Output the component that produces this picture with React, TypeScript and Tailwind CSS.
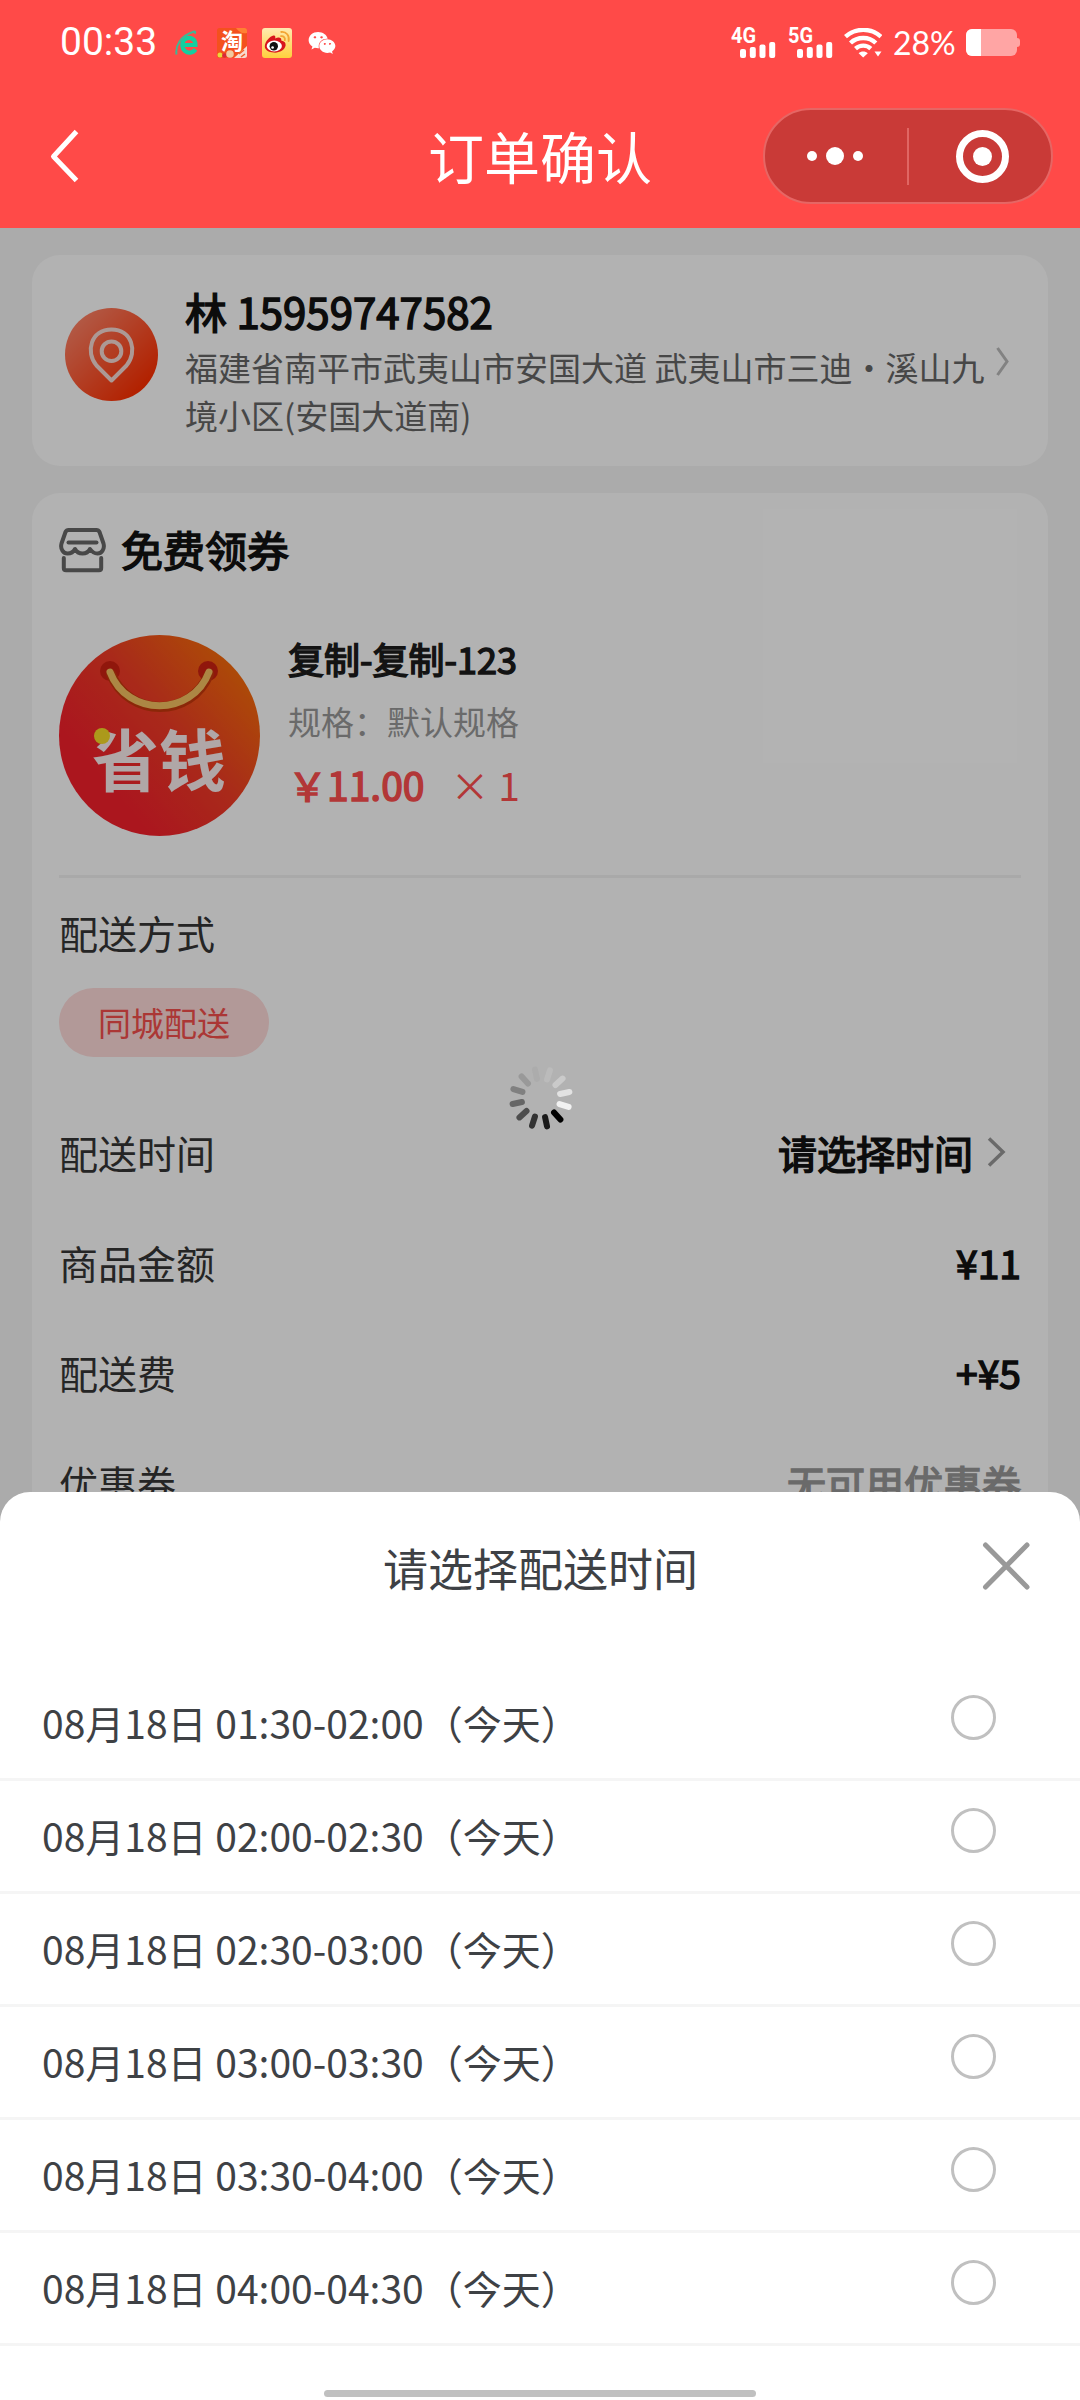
import { useState } from "react";
import { FaWeixin } from "react-icons/fa";

interface TimeSlot {
  id: number;
  label: string;
}

interface SummaryRowProps {
  label: string;
  value: string;
  muted?: boolean;
  arrow?: boolean;
}

const slots: TimeSlot[] = [
  { id: 1, label: "08月18日 01:30-02:00（今天）" },
  { id: 2, label: "08月18日 02:00-02:30（今天）" },
  { id: 3, label: "08月18日 02:30-03:00（今天）" },
  { id: 4, label: "08月18日 03:00-03:30（今天）" },
  { id: 5, label: "08月18日 03:30-04:00（今天）" },
  { id: 6, label: "08月18日 04:00-04:30（今天）" },
];

// starts at the darkest spoke, clockwise
const spokes = ["#000", "#1a1a1a", "#333", "#4d4d4d", "#666", "#808080", "#999", "#acacac", "#bbb", "#cacaca", "#e2e2e2", "#f2f2f2"];

const BrowserIcon = () => (
  <svg className="h-[26px] w-[24px]" viewBox="0 0 24 26" fill="none">
    <path d="M20.500 19.500C18 23.200 13 23.600 10 21C6.800 18.500 6.600 13.600 8.600 10.600C11 7 17 7 19.300 10.500C20.300 12 20.600 13.600 20.500 15H9" stroke="#14cfa0" strokeWidth="4.200" />
    <path d="M1.500 24.500C.2 16 5 6 19 1.500C20.500 1.200 20.500 2.600 19.500 3.600" stroke="#3fb795" strokeWidth="2" />
  </svg>
);

const TaobaoIcon = () => (
  <svg className="h-[30px] w-[30px] overflow-visible" viewBox="0 0 30 30">
    <rect width="30" height="30" rx="2.500" fill="#f4511e" />
    <path d="M19 0h8.500A2.500 2.500 0 0 1 30 2.500V5c-5 1-8-1-11-5z" fill="#ff8033" />
    <path d="M17 30l13-12v9.500a2.500 2.500 0 0 1-2.500 2.500z" fill="#f7d9d0" />
    <text x="4" y="20.500" fontSize="22" fontWeight="700" fill="#fff" fontFamily="Noto Sans CJK SC, sans-serif">淘</text>
    <circle cx="3" cy="27" r="2.500" fill="#e8d83c" />
    <circle cx="7.500" cy="27.500" r="2.300" fill="#d8293a" />
    <circle cx="13" cy="26" r="3.800" fill="#f1c9a0" />
    <path d="M22 26l5-4M24 29l4-3" stroke="#f0602c" strokeWidth="1.500" />
  </svg>
);

const WeiboIcon = () => (
  <svg className="h-[30px] w-[30px]" viewBox="0 0 30 30">
    <defs>
      <linearGradient id="weibo" x1="0" y1="0" x2="0" y2="1">
        <stop offset="0" stopColor="#ffeab0" />
        <stop offset="1" stopColor="#ffcf3d" />
      </linearGradient>
    </defs>
    <rect width="30" height="30" rx="3" fill="url(#weibo)" />
    <path d="M2.800 18.500C2.800 14 8 8 11.500 7.600C13.600 7.400 13.500 9 13.200 10.400C16 9.200 20 9 19.200 12.600C22.500 13.300 24 15 23.600 17.600C22.800 22.500 17 25 11.800 24.600C6.600 24.200 2.800 22 2.800 18.500z" fill="#d8151c" />
    <ellipse cx="12.300" cy="18" rx="7.600" ry="5.400" fill="#fff" />
    <circle cx="11.800" cy="18.200" r="4.200" fill="#111" />
    <circle cx="10.600" cy="19.500" r="1.300" fill="#fff" />
    <path d="M19 8.200c2.600-.4 4.400 1.600 3.800 4M19.200 4c5-.5 8.600 3.600 7.400 9" fill="none" stroke="#f3a533" strokeWidth="1.800" strokeLinecap="round" />
  </svg>
);

const Signal = ({ type }: { type: string }) => (
  <svg className="h-[32px] w-[46px] overflow-visible" viewBox="0 0 46 32">
    <text x="0" y="16" fontSize="21.500" fontWeight="700" fill="#fff" fontFamily="Roboto, sans-serif" textLength="25" lengthAdjust="spacingAndGlyphs">{type}</text>
    <rect x="9" y="22" width="6" height="9" rx="2" fill="#fff" />
    <rect x="18.800" y="20" width="6" height="11" rx="2" fill="#fff" />
    <rect x="28.500" y="17.500" width="6" height="13.500" rx="2" fill="#fff" />
    <rect x="38.200" y="15" width="6" height="16" rx="2" fill="#fff" />
  </svg>
);

const WifiIcon = () => (
  <svg className="h-[30px] w-[38px]" viewBox="0 0 38 30" fill="none" stroke="#fff" strokeWidth="4.400">
    <path d="M1.500 8.700C11.500-.4 27-.4 37 8.700" />
    <path d="M6.500 15C13.500 8.400 25 8.400 31.800 15" />
    <path d="M11.500 20.600C16 16.600 22.600 16.600 26.800 20.600" />
    <path d="M14.600 25.300C17 23 21.400 23 23.800 25.300L19.200 29.500z" fill="#fff" stroke="none" />
    <path d="M30.500 23.500h7l-3.500 5z" fill="#fff" stroke="none" />
  </svg>
);

const StatusBar = () => (
  <div className="flex h-[84px] items-center pt-px pl-[60px] pr-[60px] text-white">
    <span className="w-[115px] font-[Roboto,sans-serif] text-[39px] leading-none">00:33</span>
    <BrowserIcon />
    <span className="ml-[18px]"><TaobaoIcon /></span>
    <span className="ml-[15px]"><WeiboIcon /></span>
    <FaWeixin className="ml-[16px] h-[28px] w-[28px]" />
    <div className="ml-auto flex items-center">
      <Signal type="4G" />
      <span className="ml-[11px]"><Signal type="5G" /></span>
      <span className="ml-[10px]"><WifiIcon /></span>
      <span className="ml-[11px] w-[73px] whitespace-nowrap font-[Lato,sans-serif] text-[32px] leading-none">28%</span>
      <div className="flex h-[27px] w-[51px] overflow-hidden rounded-[6px] bg-white/50">
        <div className="w-[15px] bg-white" />
      </div>
      <div className="h-[9px] w-[3px] rounded-r-sm bg-white/50" />
    </div>
  </div>
);

const NavBar = () => (
  <div className="flex h-[144px] items-center justify-between pl-[49px] pr-[27px]">
    <svg className="h-[54px] w-[32px]" viewBox="0 0 32 54" fill="none" stroke="#fff" strokeWidth="5">
      <path d="M27.500 2.500L4.500 27.500L27.500 51.500" strokeLinejoin="round" />
    </svg>
    <h1 className="-mt-[2px] ml-[347px] text-[56px] leading-[80px] text-white">订单确认</h1>
    <div className="ml-auto flex h-[96px] w-[290px] items-center rounded-full border-2 border-[#e66664] bg-[#c93a37]">
      <div className="flex w-[142px] items-center justify-center gap-[9px] pr-[2px]">
        <i className="size-[10px] rounded-full bg-white" />
        <i className="size-[18px] rounded-full bg-white" />
        <i className="size-[10px] rounded-full bg-white" />
      </div>
      <div className="h-[57px] w-[2px] bg-[#e06663]" />
      <div className="flex flex-1 justify-center pl-[5px]">
        <div className="flex size-[53px] items-center justify-center rounded-full border-[7px] border-white">
          <i className="size-[19px] rounded-full bg-white" />
        </div>
      </div>
    </div>
  </div>
);

const AddressCard = () => (
  <section className="flex h-[211px] rounded-[28px] bg-white pl-[33px]">
    <svg className="mt-[53px] size-[93px] shrink-0" viewBox="0 0 93 93" fill="none">
      <defs>
        <linearGradient id="pin" x1="0.1" y1="0.1" x2="0.85" y2="0.85">
          <stop offset="0" stopColor="#ff8468" />
          <stop offset="1" stopColor="#ff2f00" />
        </linearGradient>
      </defs>
      <circle cx="46.500" cy="46.500" r="46.500" fill="url(#pin)" />
      <path d="M46.500 72.500L31.500 57.500C20 44 26 21.500 46.500 21.500C67 21.500 73 44 61.500 57.500z" stroke="#f7dcd6" strokeWidth="4" strokeLinejoin="round" />
      <circle cx="46.500" cy="43.200" r="9.800" stroke="#f7dcd6" strokeWidth="4" />
    </svg>
    <div className="ml-[27px] w-[800px] pt-[26px]">
      <p className="text-[42px] leading-[60px] text-[#121212] [-webkit-text-stroke:1.500px_currentColor]">林 15959747582</p>
      <p className="mt-[2px] text-[33px] leading-[48px] text-[#666]">福建省南平市武夷山市安国大道 武夷山市三迪・溪山九境小区(安国大道南)</p>
    </div>
    <svg className="mt-[91px] ml-[11px] h-[31px] w-[13px]" viewBox="0 0 13 31" fill="none" stroke="#bbb" strokeWidth="3">
      <path d="M1.500 2L11 15.500L1.500 29" />
    </svg>
  </section>
);

const StoreIcon = () => (
  <svg className="h-[46px] w-[48px]" viewBox="0 0 48 46" fill="none" stroke="#686868" strokeWidth="4" strokeLinejoin="round" strokeLinecap="round">
    <path d="M9.500 3H37.500C39 3 40 4 40.500 5L44.500 16.500C46 22 42.500 26.500 38.500 26.500C35 26.500 33 25 31 22C29.500 25 27 26.500 23.500 26.500C20 26.500 17.500 25 16 22C14.500 25 12 26.500 8.500 26.500C4.500 26.500 1 22 2.500 16.500L6.500 5C7 4 8 3 9.500 3z" />
    <path d="M9.500 15.500H37.500" />
    <path d="M4.800 31V41C4.800 42.500 5.500 43.300 7 43.300H40C41.500 43.300 42.200 42.500 42.200 41V31" />
  </svg>
);

const ProductLogo = () => (
  <svg className="size-[201px] shrink-0" viewBox="0 0 201 201">
    <defs>
      <linearGradient id="bag" x1="0.9" y1="0.2" x2="0.25" y2="0.75">
        <stop offset="0" stopColor="#f76a0c" />
        <stop offset="0.5" stopColor="#f23c26" />
        <stop offset="1" stopColor="#f5202c" />
      </linearGradient>
    </defs>
    <circle cx="100.500" cy="100.500" r="100.500" fill="url(#bag)" />
    <circle cx="51" cy="36" r="10" fill="#cf2112" />
    <circle cx="149" cy="36" r="10" fill="#cf2112" />
    <path d="M52 38C70 82 132 82 150 38" transform="translate(0 1)" fill="none" stroke="#c8380c" strokeWidth="10" strokeLinecap="round" />
    <path d="M51 37C68 82 133 82 150 37" fill="none" stroke="#f7c262" strokeWidth="7" strokeLinecap="round" />
    <text x="33" y="151" fontSize="67" fontWeight="700" fill="#fdeff0" fontFamily="Noto Sans CJK SC, sans-serif">省钱</text>
    <circle cx="43" cy="101" r="8" fill="#f7dc28" />
  </svg>
);

const SummaryRow = ({ label, value, muted, arrow }: SummaryRowProps) => (
  <div className="flex h-[110px] items-center justify-between pb-[5px] text-[39px]">
    <span className="text-[#363636]">{label}</span>
    <div className="flex items-center">
      <span className={muted ? "text-[#999] [-webkit-text-stroke:1.500px_currentColor]" : "text-[#121212] [-webkit-text-stroke:1.500px_currentColor]"}>{value}</span>
      {arrow && (
        <svg className="mr-[15px] ml-[14px] h-[32px] w-[19px]" viewBox="0 0 19 32" fill="none" stroke="#999" strokeWidth="3.500">
          <path d="M2 1.500L16 15L2 28.500" />
        </svg>
      )}
    </div>
  </div>
);

const OrderCard = () => (
  <section className="mt-[27px] rounded-[28px] bg-white px-[27px] pt-[27px]">
    <div className="flex h-[60px] items-center">
      <StoreIcon />
      <h2 className="-mt-[2px] ml-[14px] text-[42px] leading-[60px] text-[#121212] [-webkit-text-stroke:1.500px_currentColor]">免费领券</h2>
    </div>
    <div className="mt-[55px] flex items-start">
      <ProductLogo />
      <div className="-mt-[8px] ml-[28px] leading-[63px]">
        <p className="text-[36px] text-[#1c1c1c] [-webkit-text-stroke:1.500px_currentColor]">复制-复制-123</p>
        <p className="text-[33px] leading-[63px] text-[#999]">规格：默认规格</p>
        <p className="flex items-center text-[39px] text-[#ff4f4f]">
          <span className="[-webkit-text-stroke:1.500px_currentColor]">￥11.00</span>
          <span className="ml-[26px]">× 1</span>
        </p>
      </div>
    </div>
    <div className="mt-[39px] h-[3px] bg-[#f2f2f2]" />
    <div className="flex h-[110px] items-center pb-[2px] text-[39px] text-[#363636]">配送方式</div>
    <div className="mb-[43px] flex h-[69px] w-[210px] items-center justify-center rounded-full bg-[#ffdbda] text-[33px] text-[#f5504d]">同城配送</div>
    <SummaryRow label="配送时间" value="请选择时间" arrow />
    <SummaryRow label="商品金额" value="¥11" />
    <SummaryRow label="配送费" value="+¥5" />
    <SummaryRow label="优惠券" value="无可用优惠券" muted />
  </section>
);

const Spinner = () => (
  <svg className="absolute top-[1065px] left-[508px] size-[66px]" viewBox="-33 -33 66 66">
    {spokes.map((color, i) => (
      <rect key={color} x="16.500" y="-3" width="15.500" height="6" rx="3" fill={color} transform={`rotate(${48 + i * 30})`} />
    ))}
  </svg>
);

const TimeSheet = () => {
  const [selected, setSelected] = useState<number | null>(null);

  return (
    <div className="absolute inset-x-0 bottom-0 flex h-[908px] flex-col rounded-t-[30px] bg-white text-[#3e4145]">
      <div className="flex h-[176px] items-start justify-between pt-[41px] pr-[48px]">
        <h3 className="ml-[383px] text-[45px] leading-[70px]">请选择配送时间</h3>
        <svg className="mt-[8px] size-[51px]" viewBox="0 0 51 51" stroke="#999" strokeWidth="5" strokeLinecap="round">
          <path d="M4.500 4L46 46M46 4L4.500 46" />
        </svg>
      </div>
      <ul>
        {slots.map((slot) => (
          <li
            key={slot.id}
            onClick={() => setSelected(slot.id)}
            className="flex h-[113px] items-start justify-between border-b-[3px] border-[#f5f5f5] pr-[84px] pl-[42px]"
          >
            <span className="pt-[25px] text-[39px] leading-[58px]">{slot.label}</span>
            <span className="mt-[27px] flex size-[45px] items-center justify-center rounded-full border-[3px] border-[#c0c0c0]">
              {selected === slot.id && <i className="size-[25px] rounded-full bg-[#ff4a48]" />}
            </span>
          </li>
        ))}
      </ul>
      <div className="mx-auto mt-auto mb-[3px] h-[7px] w-[432px] rounded-full bg-[#c0c0c0]" />
    </div>
  );
};

export default function App() {
  return (
    <div className="relative flex h-[2400px] w-[1080px] flex-col overflow-hidden bg-[#f5f5f5] font-['Noto_Sans_CJK_SC',sans-serif]">
      <header className="shrink-0 bg-[#ff4a48]">
        <StatusBar />
        <NavBar />
      </header>
      <main className="relative flex-1 px-[32px] pt-[27px]">
        <AddressCard />
        <OrderCard />
        <div className="absolute inset-0 bg-black/30" />
      </main>
      <Spinner />
      <TimeSheet />
    </div>
  );
}
